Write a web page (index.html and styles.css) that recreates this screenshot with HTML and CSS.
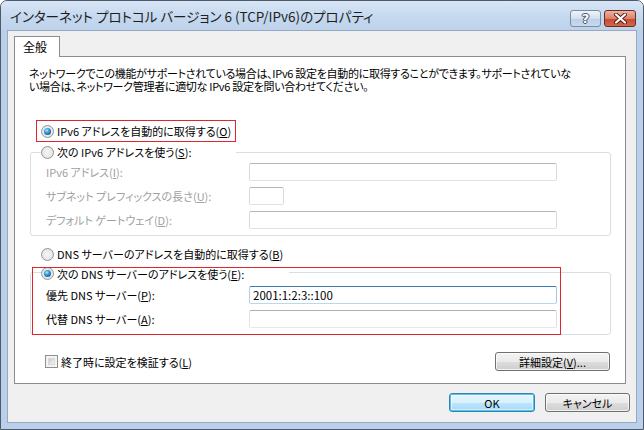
FILE: index.html
```html
<!DOCTYPE html>
<html lang="ja">
<head>
<meta charset="utf-8">
<title>インターネット プロトコル バージョン 6 (TCP/IPv6)のプロパティ</title>
<link rel="stylesheet" href="styles.css">
</head>
<body>
<div class="window">
  <div class="titlebar">
    <span class="title">インターネット プロトコル バージョン 6 (TCP/IPv6)のプロパティ</span>
    <div class="caption-btns">
      <span class="cbtn help">?</span>
      <span class="cbtn close">
        <svg width="13" height="11" viewBox="0 0 13 11"><path d="M2 1.5 L11 9.5 M11 1.5 L2 9.5" stroke="#5a1a10" stroke-width="4" stroke-linecap="round"/><path d="M2 1.5 L11 9.5 M11 1.5 L2 9.5" stroke="#ffffff" stroke-width="2.2" stroke-linecap="round"/></svg>
      </span>
    </div>
  </div>
  <div class="client">
    <div class="tabs"><div class="tab">全般</div></div>
    <div class="panel">
      <p class="desc"><span class="dl">ネットワークでこの機能がサポートされている場合は、IPv6 設定を自動的に取得することができます。サポートされていな</span><span class="dl">い場合は、ネットワーク管理者に適切な IPv6 設定を問い合わせてください。</span></p>

      <div class="hl">
        <span class="opt"><span class="radio on"></span><span>IPv6 アドレスを自動的に取得する(<u>O</u>)</span></span>
      </div>

      <fieldset class="group g1 disabled">
        <legend class="lg lg1"><span class="opt"><span class="radio"></span><span>次の IPv6 アドレスを使う(<u>S</u>):</span></span></legend>
        <div class="row first"><span class="lbl">IPv6 アドレス(<u>I</u>):</span><span class="input wide dis"></span></div>
        <div class="row"><span class="lbl">サブネット プレフィックスの長さ(<u>U</u>):</span><span class="input small dis"></span></div>
        <div class="row"><span class="lbl">デフォルト ゲートウェイ(<u>D</u>):</span><span class="input wide dis"></span></div>
      </fieldset>

      <div class="dnsauto">
        <span class="opt"><span class="radio"></span><span>DNS サーバーのアドレスを自動的に取得する(<u>B</u>)</span></span>
      </div>

      <fieldset class="group g2">
        <legend class="lg lg2"><span class="opt"><span class="radio on"></span><span>次の DNS サーバーのアドレスを使う(<u>E</u>):</span></span></legend>
        <div class="row first2"><span class="lbl">優先 DNS サーバー(<u>P</u>):</span><span class="input wide focus">2001:1:2:3::100</span></div>
        <div class="row"><span class="lbl">代替 DNS サーバー(<u>A</u>):</span><span class="input wide"></span></div>
      </fieldset>

      <div class="bottomrow">
        <span class="check"><span class="box"></span><span>終了時に設定を検証する(<u>L</u>)</span></span>
        <span class="btn adv">詳細設定(<u>V</u>)...</span>
      </div>

      <div class="redbox"></div>
    </div>
    <div class="footer">
      <span class="btn ok">OK</span>
      <span class="btn cancel">キャンセル</span>
    </div>
  </div>
</div>
</body>
</html>
```

FILE: styles.css
```css
html, body {
  margin: 0;
  padding: 0;
}
body {
  width: 644px;
  height: 430px;
  overflow: hidden;
  background: #ffffff;
  font-family: "Noto Sans CJK JP", "Noto Sans", sans-serif;
  font-size: 11px;
  font-feature-settings: "palt";
  color: #000;
}
u { text-decoration: underline; text-underline-offset: 1px; }

.window {
  box-sizing: border-box;
  width: 644px;
  height: 430px;
  border: 1px solid #4f5a69;
  border-radius: 7px 7px 0 0;
  background: linear-gradient(#c9dbf0, #bad0ea 30px, #bad0ea);
  display: flex;
  flex-direction: column;
}
.titlebar {
  height: 29px;
  display: flex;
  align-items: flex-start;
  justify-content: space-between;
  background: linear-gradient(#d8e6f6, #c3d7ee 60%, #bed3eb);
  border-radius: 6px 6px 0 0;
}
.title {
  margin: 6px 0 0 9px;
  line-height: 18px;
  font-size: 13.5px;
  color: #1e1e1e;
  white-space: nowrap;
}
.caption-btns {
  display: flex;
  gap: 3px;
  margin: 9px 7px 0 0;
}
.cbtn {
  box-sizing: border-box;
  width: 31px;
  height: 17px;
  border-radius: 3px;
  display: flex;
  align-items: center;
  justify-content: center;
}
.help {
  border: 1px solid #7a8ca3;
  background: linear-gradient(#eef3fa, #d3e0ef 50%, #bccfe6 51%, #c9daee);
  color: #ffffff;
  font-family: "DejaVu Sans", sans-serif;
  font-weight: bold;
  font-size: 13px;
  text-shadow: 0 0 1px #35465c, 1px 0 0 #4a5b72, -1px 0 0 #4a5b72, 0 1px 0 #4a5b72, 0 -1px 0 #4a5b72;
}
.close {
  width: 32px;
  border: 1px solid #6e2c20;
  background: linear-gradient(#eab4a3, #d9826b 50%, #c44a2f 51%, #d2664a);
}

.client {
  flex: 1;
  margin: 0 6px 6px 6px;
  border: 1px solid #95a9c2;
  background: #f0f0f0;
  padding: 5px 6px 0 6px;
  display: flex;
  flex-direction: column;
}
.tabs {
  display: flex;
  position: relative;
  z-index: 1;
  margin-bottom: -1px;
}
.tab {
  box-sizing: border-box;
  width: 46px;
  height: 21px;
  border: 1px solid #898c95;
  border-bottom: none;
  background: #ffffff;
  padding: 3px 0 0 8px;
  line-height: 14px;
  font-size: 12px;
}
.panel {
  position: relative;
  box-sizing: border-box;
  width: 612px;
  border: 1px solid #898c95;
  background: #ffffff;
  padding: 10px 0 12px 0;
}
.desc {
  margin: 0 0 0 14px;
  display: flex;
  flex-direction: column;
}
.dl {
  display: block;
  height: 13px;
  line-height: 13px;
  white-space: nowrap;
  letter-spacing: -0.3px;
}
.hl {
  box-sizing: border-box;
  width: 200px;
  height: 22px;
  margin: 27px 0 0 21px;
  border: 1px solid #e0262c;
  padding-left: 4px;
  display: flex;
  align-items: center;
}
.opt {
  display: inline-flex;
  align-items: center;
  gap: 3px;
  line-height: 14px;
  white-space: nowrap;
}
.radio {
  box-sizing: border-box;
  width: 13px;
  height: 13px;
  border-radius: 50%;
  border: 1px solid #959595;
  background: radial-gradient(circle at 50% 50%, #f6f6f6 0, #dedede 100%);
  display: inline-flex;
  align-items: center;
  justify-content: center;
  flex: none;
}
.radio.on::after {
  content: "";
  width: 7px;
  height: 7px;
  border-radius: 50%;
  background: radial-gradient(circle at 40% 35%, #bfe9ff 0, #3aa0e0 35%, #125ea6 75%, #0b3e78 100%);
}

.group {
  box-sizing: border-box;
  width: 581px;
  margin: 3px 0 0 15px;
  padding: 0 0 6px 0;
  border: 1px solid #d5dfe5;
  border-radius: 3px;
  min-inline-size: 0;
}
.lg {
  margin-left: 10px;
  padding: 0;
  height: 14px;
  line-height: 14px;
  background: #fff;
}
.lg1 { width: 195px; }
.lg2 { width: 248px; }
.disabled .lbl { color: #a0a0a0; }

.row {
  display: flex;
  align-items: center;
  height: 18px;
  margin-top: 6px;
}
.row.first { margin-top: 4px; }
.row.first2 { margin-top: 7px; }
.lbl {
  box-sizing: border-box;
  width: 218px;
  padding-left: 15px;
  white-space: nowrap;
}
.input {
  box-sizing: border-box;
  height: 18px;
  border: 1px solid;
  border-color: #abadb3 #dbdfe6 #e3e9ef #e2e3ea;
  border-radius: 2px;
  background: #fff;
  padding: 0 3px;
  line-height: 16px;
  font-size: 11.5px;
}
.input.wide { width: 308px; }
.input.small { width: 35px; }
.input.dis { border-color: #b5b5b5 #dadada #e1e1e1 #dadada; }
.input.focus { border-color: #3d7bad #a4c9e3 #b7d9ed #b5cfe7; }

.dnsauto {
  margin: 11px 0 0 26px;
  height: 14px;
  display: flex;
  align-items: center;
}
.g2 { margin-top: 4px; padding-bottom: 6px; }

.bottomrow {
  display: flex;
  align-items: center;
  justify-content: space-between;
  margin: 17px 15px 0 30px;
}
.check {
  display: inline-flex;
  align-items: center;
  gap: 3px;
  white-space: nowrap;
  line-height: 14px;
}
.box {
  box-sizing: border-box;
  width: 13px;
  height: 13px;
  border: 1px solid #8f8f8f;
  background: #f4f4f4;
  padding: 2px;
  display: inline-flex;
}
.box::after {
  content: "";
  flex: 1;
  background: linear-gradient(135deg, #cbcbcb, #f6f6f6);
  border: 1px solid #d8d8d8;
}
.btn {
  box-sizing: border-box;
  height: 19px;
  border: 1px solid #707070;
  border-radius: 3px;
  background: linear-gradient(#f3f3f3, #ebebeb 50%, #dddddd 51%, #cfcfcf);
  display: inline-flex;
  align-items: center;
  justify-content: center;
  line-height: 14px;
  white-space: nowrap;
  box-shadow: inset 0 0 0 1px rgba(255,255,255,0.7);
}
.adv { width: 115px; }
.footer {
  display: flex;
  justify-content: flex-end;
  gap: 10px;
  margin-top: 9px;
}
.ok {
  width: 86px;
  border-color: #3c7fb1;
  background: linear-gradient(#eaf6fd, #d9f0fc 50%, #bee6fd 51%, #a7d9f5);
  box-shadow: inset 0 0 0 1px #4ac6f0, inset 0 0 0 2px rgba(255,255,255,0.5);
}
.cancel { width: 85px; }

.redbox {
  position: absolute;
  left: 17px;
  top: 210px;
  width: 529px;
  height: 68px;
  box-sizing: border-box;
  border: 1px solid #e0262c;
  pointer-events: none;
}
```
